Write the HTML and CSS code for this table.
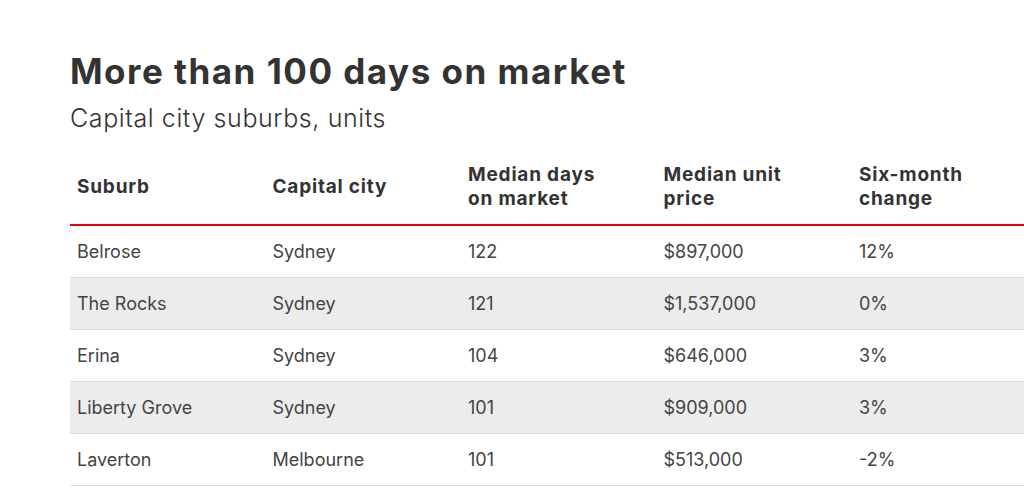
FILE: index.html
```html
<!DOCTYPE html>
<html lang="en">
<head>
<meta charset="utf-8">
<title>More than 100 days on market</title>
<link rel="stylesheet" href="styles.css">
</head>
<body>
<main class="page">
  <h1 class="title">More than 100 days on market</h1>
  <p class="subtitle">Capital city suburbs, units</p>
  <table class="data">
    <thead>
      <tr>
        <th>Suburb</th>
        <th>Capital city</th>
        <th>Median days<br>on market</th>
        <th>Median unit<br>price</th>
        <th>Six-month<br>change</th>
      </tr>
    </thead>
    <tbody>
      <tr><td>Belrose</td><td>Sydney</td><td>122</td><td>$897,000</td><td>12%</td></tr>
      <tr><td>The Rocks</td><td>Sydney</td><td>121</td><td>$1,537,000</td><td>0%</td></tr>
      <tr><td>Erina</td><td>Sydney</td><td>104</td><td>$646,000</td><td>3%</td></tr>
      <tr><td>Liberty Grove</td><td>Sydney</td><td>101</td><td>$909,000</td><td>3%</td></tr>
      <tr><td>Laverton</td><td>Melbourne</td><td>101</td><td>$513,000</td><td>-2%</td></tr>
    </tbody>
  </table>
</main>
</body>
</html>
```

FILE: styles.css
```css
html, body {
  margin: 0;
  padding: 0;
  background: #fff;
  overflow: hidden;
}
body {
  font-family: Inter, "Noto Sans", sans-serif;
  color: #333;
}
.page {
  padding: 51px 0 0 70px;
}
.title {
  margin: 0;
  font-size: 35px;
  line-height: 40px;
  font-weight: 700;
  letter-spacing: 1.5px;
  color: #333;
}
.subtitle {
  margin: 11px 0 0;
  font-size: 25px;
  line-height: 32px;
  font-weight: 300;
  letter-spacing: 0.6px;
  color: #333;
}
.data {
  margin-top: 16px;
  width: 977.5px;
  table-layout: fixed;
  border-collapse: collapse;
}
.data th {
  text-align: left;
  vertical-align: middle;
  font-size: 19px;
  line-height: 24px;
  font-weight: 700;
  letter-spacing: 0.8px;
  color: #333;
  padding: 12px 7px 12px;
  height: 50px;
  border-bottom: 2px solid #e6000a;
}
.data td {
  font-size: 18px;
  line-height: 24px;
  font-weight: 400;
  color: #444;
  padding: 14px 7px 13px;
  border-bottom: 1px solid #dcdcdc;
}
.data tbody tr:nth-child(even) td {
  background: #ececec;
}
```
